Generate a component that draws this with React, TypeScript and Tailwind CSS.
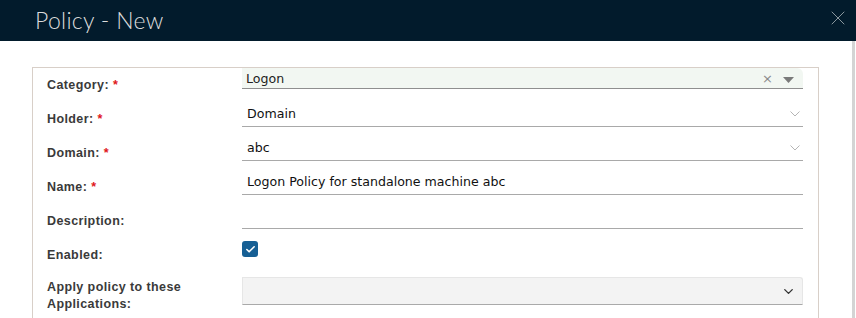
import { Check, ChevronDown, X } from "lucide-react"

type Row = {
    label: string
    required?: boolean
    kind: "combo" | "select" | "text" | "check" | "multi"
    value?: string
}

const rows: Row[] = [
    { label: "Category:", required: true, kind: "combo", value: "Logon" },
    { label: "Holder:", required: true, kind: "select", value: "Domain" },
    { label: "Domain:", required: true, kind: "select", value: "abc" },
    { label: "Name:", required: true, kind: "text", value: "Logon Policy for standalone machine abc" },
    { label: "Description:", kind: "text", value: "" },
    { label: "Enabled:", kind: "check" },
    { label: "Apply policy to these Applications:", kind: "multi" },
]

function SmallChevron() {
    return (
        <svg width="10" height="6" viewBox="0 0 10 6" className="text-[#b5b5b5]">
            <path d="M0.5 0.5 L5 5 L9.5 0.5" fill="none" stroke="currentColor" strokeWidth="1" />
        </svg>
    )
}

function Field({ row }: { row: Row }) {
    if (row.kind === "combo") {
        return (
            <div className="h-[21px] bg-[#f2f7f2] border-b border-[#8f8f8f] rounded-tr-[6px] flex items-end pb-[1px] pl-1 pr-2">
                <span className="flex-1 text-[12.6px] leading-[16px] text-[#222]">{row.value}</span>
                <span className="text-[#8a8a8a] text-[13px] leading-[16px] mr-[10px]">×</span>
                <svg width="11" height="6" viewBox="0 0 11 6" className="mb-[4px] mr-[1px]">
                    <path d="M0 0 H11 L5.5 6 Z" fill="#7a7a7a" />
                </svg>
            </div>
        )
    }
    if (row.kind === "select" || row.kind === "text") {
        return (
            <div className="h-[25px] border-b border-[#a9a9a9] flex items-center pl-[5px] pr-[3px]">
                <span className="flex-1 text-[12.6px] leading-[16px] text-[#111]">{row.value}</span>
                {row.kind === "select" && <SmallChevron />}
            </div>
        )
    }
    if (row.kind === "check") {
        return (
            <div className="mt-[3px] w-4 h-4 rounded-[3px] bg-[#165f94] flex items-center justify-center">
                <Check size={11} strokeWidth={3.5} className="text-white" />
            </div>
        )
    }
    return (
        <div className="mt-[5px] h-[28px] bg-[#f3f3f3] border border-[#e6e6e6] border-b-[#a9a9a9] rounded-tr-[3px] flex items-center justify-end pr-[6px]">
            <ChevronDown size={15} strokeWidth={2.2} className="text-[#333]" />
        </div>
    )
}

export default function App() {
    return (
        <div className="w-[856px] h-[318px] overflow-hidden bg-white flex flex-col" style={{ fontFamily: "'DejaVu Sans', sans-serif" }}>
            <header className="h-[41px] shrink-0 bg-[#021b2c] flex items-center justify-between pl-[35px] pr-[6px]">
                <h1 className="text-[23px] font-light text-[#dcdcdc] tracking-[0.3px]" style={{ fontFamily: "Lato, sans-serif" }}>
                    Policy - New
                </h1>
                <X size={24} strokeWidth={1} className="text-[#8a979e] -mt-[5px]" />
            </header>

            <div className="flex flex-1">
                <div className="flex-1 pt-[26px] pl-[32px]">
                    <div className="w-[787px] h-[400px] border border-[#d8cfc8] pl-[14px] pr-[15px]">
                        {rows.map((row) => (
                            <div key={row.label} className="flex h-[34px]">
                                <div className={"w-[195px] shrink-0 " + (row.kind === "multi" ? "pt-[7px]" : "pt-[9px]")}>
                                    <span
                                        className="block w-[150px] text-[12.5px] leading-[17px] font-semibold text-[#3a3a3a] tracking-[0.4px]"
                                        style={{ fontFamily: "'Liberation Sans', sans-serif" }}
                                    >
                                        {row.label}
                                        {row.required && <span className="text-[#e0181c] ml-1">*</span>}
                                    </span>
                                </div>
                                <div className="flex-1">
                                    <Field row={row} />
                                </div>
                            </div>
                        ))}
                    </div>
                </div>
                <div className="w-[3px] mr-[1px] bg-[#d4d4d4]" />
            </div>
        </div>
    )
}
